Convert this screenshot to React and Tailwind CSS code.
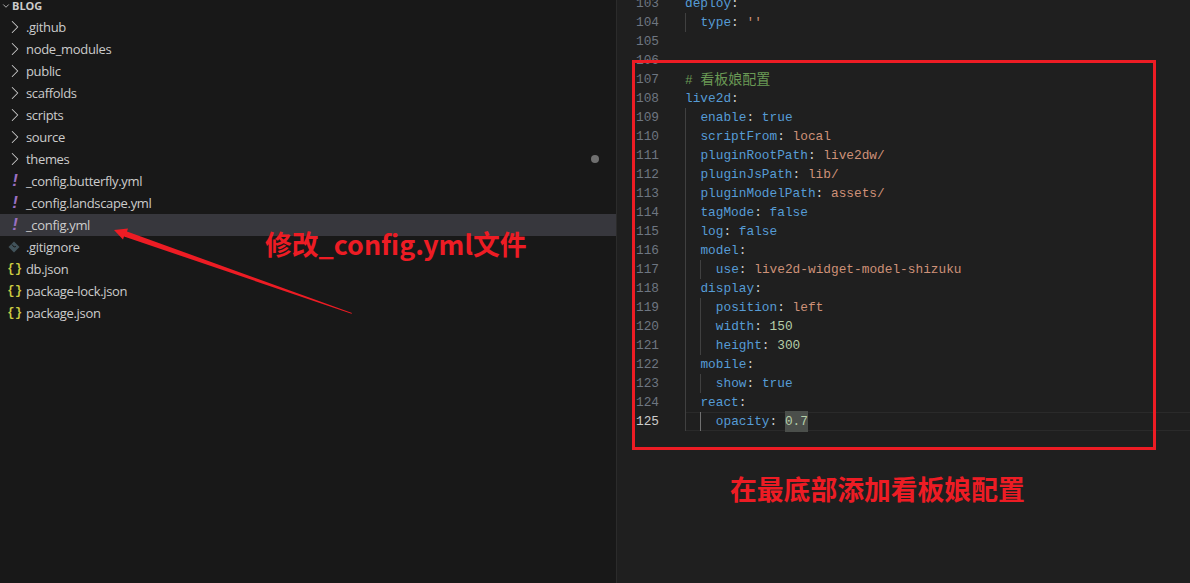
import React from "react";
import { ChevronRight, ChevronDown } from "lucide-react";

const folders = [".github", "node_modules", "public", "scaffolds", "scripts", "source", "themes"];

const files = [
  { name: "_config.butterfly.yml", icon: "yml" },
  { name: "_config.landscape.yml", icon: "yml" },
  { name: "_config.yml", icon: "yml", active: true },
  { name: ".gitignore", icon: "git" },
  { name: "db.json", icon: "json" },
  { name: "package-lock.json", icon: "json" },
  { name: "package.json", icon: "json" },
];

// depth = indent level, k = key, v = value, t = value colour
const code = [
  { n: 103, depth: 0, k: "deploy" },
  { n: 104, depth: 1, k: "type", v: "''", t: "str" },
  { n: 105 },
  { n: 106 },
  { n: 107, comment: "看板娘配置" },
  { n: 108, depth: 0, k: "live2d" },
  { n: 109, depth: 1, k: "enable", v: "true", t: "kw" },
  { n: 110, depth: 1, k: "scriptFrom", v: "local", t: "str" },
  { n: 111, depth: 1, k: "pluginRootPath", v: "live2dw/", t: "str" },
  { n: 112, depth: 1, k: "pluginJsPath", v: "lib/", t: "str" },
  { n: 113, depth: 1, k: "pluginModelPath", v: "assets/", t: "str" },
  { n: 114, depth: 1, k: "tagMode", v: "false", t: "kw" },
  { n: 115, depth: 1, k: "log", v: "false", t: "kw" },
  { n: 116, depth: 1, k: "model" },
  { n: 117, depth: 2, k: "use", v: "live2d-widget-model-shizuku", t: "str" },
  { n: 118, depth: 1, k: "display" },
  { n: 119, depth: 2, k: "position", v: "left", t: "str" },
  { n: 120, depth: 2, k: "width", v: "150", t: "num" },
  { n: 121, depth: 2, k: "height", v: "300", t: "num" },
  { n: 122, depth: 1, k: "mobile" },
  { n: 123, depth: 2, k: "show", v: "true", t: "kw" },
  { n: 124, depth: 1, k: "react" },
  { n: 125, depth: 2, k: "opacity", v: "0.7", t: "num", active: true },
];

function FileIcon({ type }) {
  if (type === "yml") {
    return <span className="w-4 text-center font-['Liberation_Sans',sans-serif] text-[17px] font-bold italic text-[#9a6fc0]">!</span>;
  }
  if (type === "git") {
    return (
      <svg viewBox="0 0 12 12" className="-ml-[2px] h-3 w-3 shrink-0">
        <path d="M6 .5 11.5 6 6 11.5.5 6z" fill="#41535b" />
        <path d="M4 3.5 6 6l2-.5" stroke="#1b1b1b" strokeWidth="1" fill="none" />
      </svg>
    );
  }
  return <span className="w-4 text-center font-['Liberation_Mono',monospace] text-[12px] font-bold tracking-[0.5px] text-[#cbcb41]">{"{}"}</span>;
}

function TreeRow({ children, icon, active, dot }) {
  return (
    <div className={`flex h-[22px] items-center ${active ? "bg-[#37373d]" : ""}`}>
      <div className="ml-[7px] flex w-4 shrink-0 items-center justify-center">{icon}</div>
      <span className="ml-[3px] pt-[2px] text-[13px] tracking-[-0.33px] text-[#cccccc]">{children}</span>
      {dot && <span className="ml-auto mr-[17px] h-2 w-2 rounded-full bg-[#6f6f6f]" />}
    </div>
  );
}

function CodeLine({ line }) {
  const valueColor = { str: "text-[#ce9178]", kw: "text-[#569cd6]", num: "text-[#b5cea8]" }[line.t];
  return (
    <div className="flex h-[19px] items-center">
      <span className={`w-[42px] shrink-0 pt-px text-right ${line.active ? "text-[#cccccc]" : "text-[#6e7681]"}`}>{line.n}</span>
      <div className={`ml-[26px] flex h-full flex-1 items-center ${line.active ? "border-y border-[#2a2a2a]" : ""}`}>
        {line.depth >= 1 && <span className="h-[19px] w-[15.4px] shrink-0 border-l border-[#404040]" />}
        {line.depth >= 2 && (
          <span className={`h-[19px] w-[15.4px] shrink-0 border-l ${line.active ? "border-[#707070]" : "border-[#404040]"}`} />
        )}
        {line.comment && (
          <span className="pt-px text-[#6a9955]">
            # <span className="text-[14px]">{line.comment}</span>
          </span>
        )}
        {line.k && <span className="pt-px text-[#569cd6]">{line.k}</span>}
        {line.k && <span className="pt-px text-[#cccccc]">:</span>}
        {line.v && (
          <span className={`ml-[7.7px] pt-px ${valueColor} ${line.active ? "bg-[#4b4f4b]" : ""}`}>{line.v}</span>
        )}
      </div>
    </div>
  );
}

export default function App() {
  return (
    <div className="relative flex h-[583px] w-[1190px] overflow-hidden bg-[#1f1f1f]">
      <aside className="w-[617px] shrink-0 border-r border-[#2b2b2b] bg-[#181818] font-['Open_Sans','Noto_Sans',sans-serif]">
        <div className="-mt-[6px] flex h-[22px] items-center pl-[1px] pt-[2px]">
          <ChevronDown size={10} className="text-[#cccccc]" />
          <span className="ml-[1px] text-[11px] font-bold text-[#cccccc]">BLOG</span>
        </div>
        {folders.map((name) => (
          <TreeRow
            key={name}
            dot={name === "themes"}
            icon={<ChevronRight size={22} strokeWidth={1.1} className="shrink-0 text-[#cccccc]" />}
          >
            {name}
          </TreeRow>
        ))}
        {files.map((file) => (
          <TreeRow key={file.name} active={file.active} icon={<FileIcon type={file.icon} />}>
            {file.name}
          </TreeRow>
        ))}
      </aside>

      <main className="-mt-[6px] flex-1 font-['Liberation_Mono','Noto_Sans_CJK_SC',monospace] text-[12.8px]">
        {code.map((line) => (
          <CodeLine key={line.n} line={line} />
        ))}
      </main>

      {/* annotations drawn on top of the screenshot */}
      <div className="absolute left-[632px] top-[60px] h-[390px] w-[524px] border-[3px] border-[#ed1c24]" />
      <svg className="pointer-events-none absolute left-0 top-0 h-[583px] w-[1190px]" viewBox="0 0 1190 583">
        <path d="M114 230 128 228.5 127 231.5 352 313 351.5 313.8 124 236.5 123 239.5z" fill="#ed1c24" />
      </svg>
      <span className="absolute left-[265px] top-[224px] font-['Noto_Sans_CJK_SC',sans-serif] text-[26.8px] font-bold leading-[40px] text-[#ed1c24]">
        修改_config.yml文件
      </span>
      <span className="absolute left-[730px] top-[469px] font-['Noto_Sans_CJK_SC',sans-serif] text-[26.8px] font-bold leading-[40px] text-[#ed1c24]">
        在最底部添加看板娘配置
      </span>
    </div>
  );
}
